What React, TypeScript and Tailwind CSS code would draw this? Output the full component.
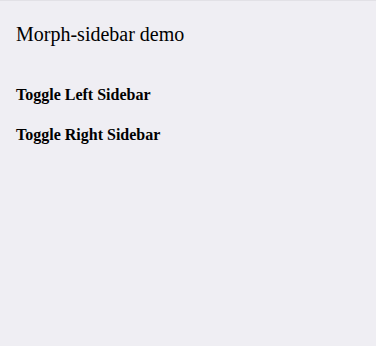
export default function App() {
  return (
    <div
      className="h-[346px] w-[376px] overflow-hidden bg-[#efeef3] border-t border-[#e2e1e6] px-4 pt-[21px] text-black"
      style={{ fontFamily: '"Liberation Serif", "Times New Roman", serif' }}
    >
      <h1 className="text-[20px] leading-6 font-normal">Morph-sidebar demo</h1>
      <div className="mt-[40px] flex flex-col gap-[22px]">
        <button className="w-fit text-left text-[16px] font-bold leading-[18px]">Toggle Left Sidebar</button>
        <button className="w-fit text-left text-[16px] font-bold leading-[18px]">Toggle Right Sidebar</button>
      </div>
    </div>
  )
}
